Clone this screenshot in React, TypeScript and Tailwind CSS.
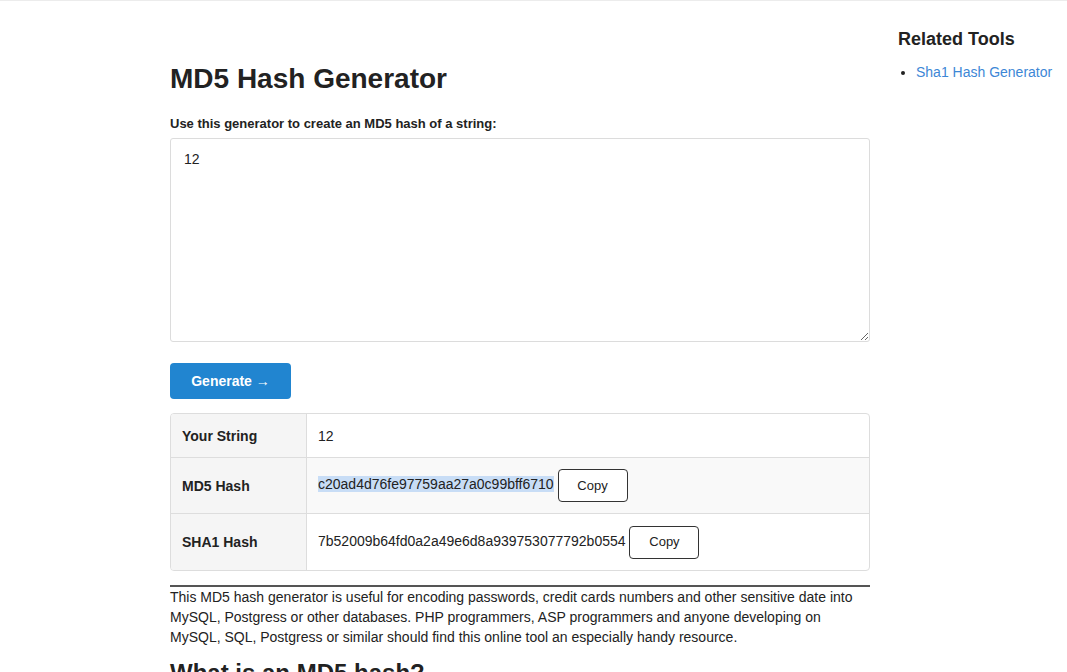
import React from "react";

export default function App() {
  const font = { fontFamily: '"Liberation Sans", Arial, Helvetica, sans-serif' };
  return (
    <div className="min-h-[672px] w-full bg-white text-[#222] border-t border-[#ececec]" style={font}>
      <div className="flex pl-[170px]">
        <main className="w-[700px] shrink-0 pt-[61px]">
          <h1 className="text-[28px] leading-[34px] font-bold text-[#222]">MD5 Hash Generator</h1>
          <label className="block mt-[20px] text-[13px] leading-[16px] font-bold text-[#222]">
            Use this generator to create an MD5 hash of a string:
          </label>
          <textarea
            defaultValue="12"
            className="block mt-[6px] w-[700px] h-[204px] border border-[#dcdcdc] rounded-[3px] px-[13px] py-[10px] text-[14px] leading-[20px] text-[#222] outline-none"
            style={font}
          />
          <button className="mt-[21px] w-[121px] h-[36px] rounded-[4px] bg-[#2185d0] text-white text-[14px] font-bold flex items-center justify-center">
            Generate →
          </button>
          <div className="mt-[14px] border border-[#dddddd] rounded-[4px] overflow-hidden text-[14px]">
            <div className="flex h-[43px]">
              <div className="w-[136px] shrink-0 bg-[#f5f5f5] border-r border-[#dddddd] px-[11px] flex items-center font-bold pt-[1px]">Your String</div>
              <div className="flex-1 px-[11px] flex items-center pt-[1px]">12</div>
            </div>
            <div className="flex h-[56px] border-t border-[#dddddd]">
              <div className="w-[136px] shrink-0 bg-[#f5f5f5] border-r border-[#dddddd] px-[11px] flex items-center font-bold pt-[1px]">MD5 Hash</div>
              <div className="flex-1 px-[11px] flex items-center bg-[#f9f9f9]">
                <div>
                  <span className="bg-[#c8ddf6]">c20ad4d76fe97759aa27a0c99bff6710</span>{" "}
                  <button className="inline-block w-[70px] h-[33px] border border-[#333] rounded-[4px] bg-white text-[13px] text-[#222] align-middle">Copy</button>
                </div>
              </div>
            </div>
            <div className="flex h-[57px] border-t border-[#dddddd]">
              <div className="w-[136px] shrink-0 bg-[#f5f5f5] border-r border-[#dddddd] px-[11px] flex items-center font-bold">SHA1 Hash</div>
              <div className="flex-1 px-[11px] flex items-center">
                <div>
                  <span>7b52009b64fd0a2a49e6d8a939753077792b0554</span>{" "}
                  <button className="inline-block w-[70px] h-[33px] border border-[#333] rounded-[4px] bg-white text-[13px] text-[#222] align-middle">Copy</button>
                </div>
              </div>
            </div>
          </div>
          <div className="mt-[14px] h-[2px] bg-[#555]" />
          <p className="text-[14px] leading-[20px] text-[#222]">
            This MD5 hash generator is useful for encoding passwords, credit cards numbers and other sensitive date into MySQL, Postgress or other databases. PHP programmers, ASP programmers and anyone developing on MySQL, SQL, Postgress or similar should find this online tool an especially handy resource.
          </p>
          <h2 className="mt-[12px] text-[24px] leading-[28px] font-bold text-[#222]">What is an MD5 hash?</h2>
        </main>
        <aside className="ml-[28px] pt-[27px] w-[169px] shrink-0">
          <h3 className="text-[18px] leading-[23px] font-bold text-[#222]">Related Tools</h3>
          <ul className="mt-[11px] list-disc pl-[18px] text-[14px] leading-[20px]">
            <li className="marker:text-[#222]">
              <a className="text-[#3d87d6]">Sha1 Hash Generator</a>
            </li>
          </ul>
        </aside>
      </div>
    </div>
  );
}
